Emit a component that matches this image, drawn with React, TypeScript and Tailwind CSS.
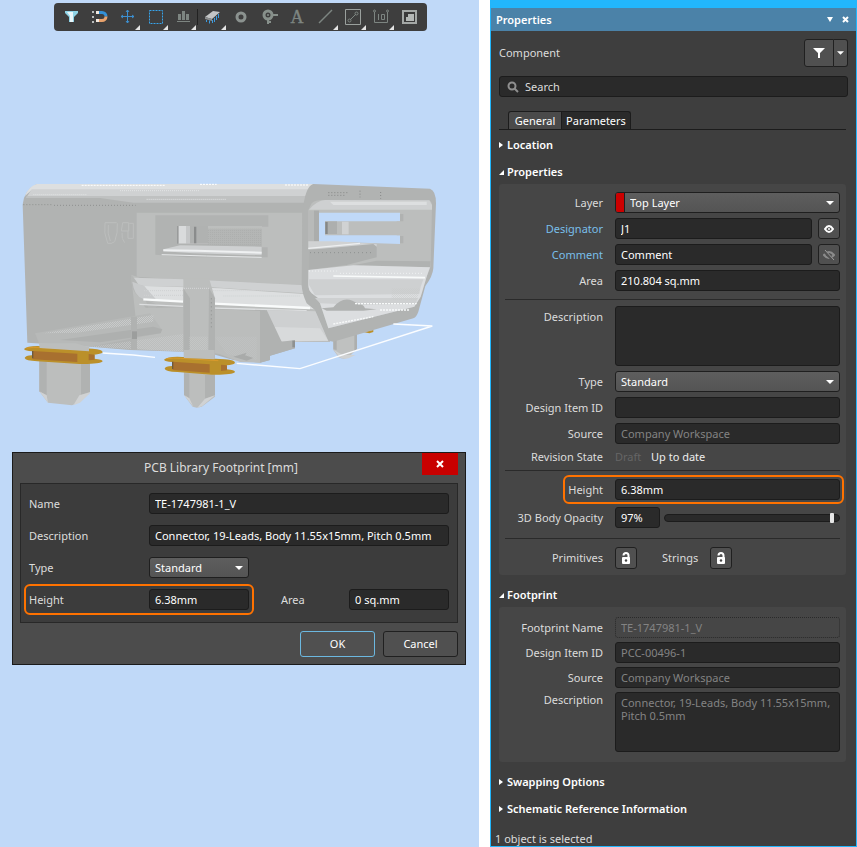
import { useState } from 'react';
import type { ReactNode } from 'react';
import clsx from 'clsx';

const FIELD =
  'h-[21px] min-w-0 rounded-[3px] border border-[#1c1c1c] bg-[#2a2a2a] px-[5px] text-[11px] leading-[19px] outline-none';
const BUTTON =
  'flex items-center justify-center rounded-[3px] border border-[#202020] bg-[#505050]';

interface SelectBoxProps {
  id: string;
  value: string;
  className?: string;
  swatch?: boolean;
}

function SelectBox({ id, value, className, swatch }: SelectBoxProps) {
  return (
    <div
      className={clsx(
        'relative flex h-[21px] items-center overflow-hidden rounded-[3px] border border-[#1f1f1f] bg-linear-to-b from-[#5e5e5e] to-[#545454]',
        className,
      )}
    >
      {swatch && <span className="h-full w-[9px] shrink-0 border-r border-[#1f1f1f] bg-[#cc0000]" />}
      <select
        id={id}
        defaultValue={value}
        className="h-full w-full appearance-none bg-transparent px-[5px] text-[11px] leading-[19px] text-white outline-none"
      >
        <option>{value}</option>
      </select>
      <svg className="pointer-events-none absolute right-[5px] h-[4px] w-[8px]" viewBox="0 0 8 4">
        <path d="M0 0h8L4 4z" fill="#fff" />
      </svg>
    </div>
  );
}

interface RowProps {
  label: string;
  htmlFor?: string;
  top?: boolean;
  link?: boolean;
  labelClassName?: string;
  children: ReactNode;
}

function Row({ label, htmlFor, top, link, labelClassName, children }: RowProps) {
  return (
    <div className={clsx('flex', top ? 'items-start' : 'items-center')}>
      <label
        htmlFor={htmlFor}
        className={clsx(
          'mr-3 w-[98px] shrink-0 text-right leading-4',
          link ? 'text-[#79bfea]' : 'text-[#dcdcdc]',
          labelClassName,
        )}
      >
        {label}
      </label>
      {children}
    </div>
  );
}

function SectionTitle({ title, open }: { title: string; open?: boolean }) {
  return (
    <button className="flex h-4 items-center gap-[3px] text-left font-semibold text-white" aria-expanded={!!open}>
      <svg className="h-[6px] w-[5px]" viewBox="0 0 5 6">
        {open ? <path d="M5 1v5H0z" fill="#fff" /> : <path d="M0 0l4 3-4 3z" fill="#fff" />}
      </svg>
      {title}
    </button>
  );
}

function Corner() {
  return <path d="M27 22v5h-5z" fill="#e4e4e4" />;
}

const TOOLS: { name: string; icon: ReactNode; menu?: boolean; divider?: boolean }[] = [
  {
    name: 'Filter',
    icon: (
      <>
        <path d="M8 8h13v2l-4 4v5h-5v-5l-4-4z" fill="#8fd3e6" />
        <path d="M10 9h6v10h-3v-6z" fill="#e9f6fa" />
      </>
    ),
  },
  {
    name: 'Snap',
    icon: (
      <>
        <path d="M7 8h2v2H7zM7 13h2v2H7zM7 18h2v2H7z" fill="#b9bdbd" />
        <path d="M12 9.500h5a4 4 0 0 1 4 4" fill="none" stroke="#3390d6" strokeWidth="3" />
        <path d="M12 17.500h5a4 4 0 0 0 4-4" fill="none" stroke="#e8a26c" strokeWidth="3" />
        <path d="M11 8h3v3h-3zM11 16h3v3h-3z" fill="#f2e8df" />
      </>
    ),
  },
  {
    name: 'Move',
    menu: true,
    icon: (
      <path
        d="M14.500 7v13M8 13.500h13M13 9l1.500-2L16 9M13 18l1.500 2 1.500-2M10 12l-2 1.500 2 1.500M19 12l2 1.500-2 1.500"
        fill="none"
        stroke="#3c8fd0"
      />
    ),
  },
  {
    name: 'Select area',
    menu: true,
    icon: <path d="M8.500 7.500h13v13h-13z" fill="none" stroke="#37a4ec" strokeDasharray="2 1" />,
  },
  {
    name: 'Align',
    menu: true,
    divider: true,
    icon: <path d="M9 11h3v6H9zM13 8h3v9h-3zM17 11h3v6h-3zM8 18h13v1H8z" fill="#7d8581" />,
  },
  {
    name: 'Place component',
    menu: true,
    icon: (
      <>
        <path d="M6 14l8-6 7 1-8 7z" fill="#c3c5c6" />
        <path d="M6 14l7 2v2l-7-2z" fill="#8d9091" />
        <path d="M7.500 17v2M10.500 17.500v3M13.500 17v3M15.500 15v4M17.500 13v4M19.500 11v4" stroke="#3c9be0" />
      </>
    ),
  },
  {
    name: 'Place pad',
    icon: <circle cx="14" cy="14" r="4" fill="none" stroke="#8b928f" strokeWidth="3" />,
  },
  {
    name: 'Place via',
    icon: (
      <>
        <circle cx="13" cy="12" r="4" fill="none" stroke="#87908b" strokeWidth="3" />
        <circle cx="13" cy="12" r="1" fill="#87908b" />
        <path d="M17 12h6M13 16v5M13 19h3" stroke="#87908b" strokeWidth="2" />
      </>
    ),
  },
  {
    name: 'Place text',
    icon: (
      <text x="14" y="20" textAnchor="middle" fontSize="18" fontFamily="Liberation Serif, serif" fill="#7d8581" stroke="#7d8581" strokeWidth="0.400">
        A
      </text>
    ),
  },
  {
    name: 'Place line',
    menu: true,
    icon: <path d="M8 20L21 7" stroke="#7d8581" strokeWidth="1.500" />,
  },
  {
    name: 'Place dimension',
    menu: true,
    icon: (
      <g fill="none" stroke="#7d8581">
        <path d="M6.500 6.500h15v15h-15z" stroke="#9aa09d" />
        <path d="M11 17l6-6" />
        <circle cx="10.500" cy="17.500" r="1.500" />
        <circle cx="17.500" cy="10.500" r="1.500" />
      </g>
    ),
  },
  {
    name: 'Place measurement',
    menu: true,
    icon: (
      <g fill="none" stroke="#7d8581">
        <path d="M7.500 9v10.500h13V9M11.500 11v6" />
        <circle cx="7.500" cy="8" r="1" />
        <circle cx="20.500" cy="8" r="1" />
        <path d="M14.500 11.500h3v5h-3z" />
      </g>
    ),
  },
  {
    name: 'Place region',
    icon: (
      <>
        <path d="M7 7h15v14H7z" fill="#a4a8a6" />
        <path d="M9 9h11v10H9z" fill="#3a3a3a" />
        <path d="M13 11h6v7h-8v-4h2z" fill="#b4b8b6" />
      </>
    ),
  },
];

function Toolbar() {
  return (
    <div className="mt-[3px] ml-[54px] flex h-7 w-[373px] items-center rounded bg-[#3e3e3e] pl-[3px]">
      {TOOLS.map((tool) => (
        <button
          key={tool.name}
          aria-label={tool.name}
          className={clsx('flex h-7 shrink-0 items-center', tool.divider ? 'w-[30px]' : 'w-7')}
        >
          <svg className="size-7 shrink-0" viewBox="0 0 28 28">
            {tool.icon}
            {tool.menu && <Corner />}
          </svg>
          {tool.divider && <span className="h-4 w-px bg-[#222]" />}
        </button>
      ))}
    </div>
  );
}

// One plated slot: two flanges with the barrel between them
function Pad({ x, y, width }: { x: number; y: number; width: number }) {
  return (
    <g transform={`translate(${x} ${y})`}>
      <path
        d={`M0 9Q8 0 40 0L${width - 30} 8Q${width} 10 ${width} 19Q${width - 6} 25 ${width - 25} 26V38Q${width} 40 ${width} 46Q${width - 8} 55 ${width - 70} 54L40 46Q4 44 2 36Q4 29 24 28V16Q4 15 0 9z`}
        fill="#bb902a"
      />
      <path d={`M26 15L${width - 76} 23V48L26 40z`} fill="#a8702f" />
      <path d={`M${width - 42} 24l18 2v15l-18 2z`} fill="#a8702f" />
      <path d="M24 15h4v22h-4z" fill="#6d5a3c" />
      <path d={`M8 6Q30 3 50 5L${width - 50} 12`} fill="none" stroke="#d99a2c" strokeWidth="3" />
    </g>
  );
}

function Connector() {
  return (
    <svg className="mt-[139px] h-[250px] w-full" viewBox="0 0 1437 750" role="img" aria-label="3D body of the connector">
      <defs>
        <pattern id="dots" width="6" height="6" patternUnits="userSpaceOnUse">
          <path d="M0 0h3v3H0zM3 3h3v3H3z" fill="#c9cbcb" />
        </pattern>
        <pattern id="darkDots" width="6" height="6" patternUnits="userSpaceOnUse">
          <path d="M0 0h3v3H0z" fill="#a2a4a4" />
        </pattern>
      </defs>

      {/* rear leg */}
      <path d="M1000 485h71v52l-25 25q-15 8-30 0l-16-22z" fill="#bfc1c0" />
      <path d="M1000 485h10v55l-10-2zM1063 485h8v52l-8 7z" fill="#adafae" />
      <path d="M1002 540l26 15h38l-20 10q-18 3-28-4z" fill="#d0d2d3" />
      <path d="M1090 486l30-6v6l-12 4z" fill="#bb902a" />

      {/* left leg */}
      <path d="M118 565h152v102l-32 30-22 9-72-8-26-34z" fill="#bcbebd" />
      <path d="M118 570h22v105l-22-10zM243 575h27v90l-27 10z" fill="#b0b2b1" />
      <path d="M118 664l22 12 4 22zM270 667l-32 9-18 30 20-8 30-28z" fill="#d0d2d3" />

      {/* shell side */}
      <path
        d="M68 104Q72 60 110 42H940L1000 300L990 515L845 515L885 510V535L810 557V570L780 578L700 570L640 553L550 545L390 540L270 530L82 518z"
        fill="#b1b3b2"
      />
      <path d="M75 78Q85 50 110 42H940L925 60H95z" fill="#dddfe0" />
      <path d="M95 58H925L917 78H82z" fill="#cfd1d2" />
      <path d="M80 78H917L914 98H400L300 84H78z" fill="#bfc1c1" />
      <path d="M245 46h250M600 43h50M855 45h70" stroke="#fff" strokeWidth="3" strokeDasharray="6 3" />
      <path d="M100 74h160M360 62h240M440 88h240" stroke="#e2e4e5" strokeWidth="3" strokeDasharray="3 3" />
      <path d="M70 104h85M162 106h245" stroke="#8f9190" strokeWidth="3" strokeDasharray="3 6" />
      <path d="M410 128H907V345L550 330L410 320z" fill="#bcbebd" />
      <path
        d="M350 158h-35q-5 30 8 62h10M325 165q-4 25 6 48M352 160q2 30-8 55l-12 6M368 158h18v25h-22zM366 188q-2 20 8 30M388 160h12v45h-16v-22"
        fill="none"
        stroke="#bcbebd"
        strokeWidth="3"
      />

      {/* side window */}
      <path d="M466 136H805V170H785V232H803V262H560L466 254z" fill="#b1b3b2" />
      <path d="M532 168H786V222H532z" fill="#bcbebd" />
      <path d="M624 176H786V224H624z" fill="#b4b6b5" />
      <path d="M624 176H786V224H624z" fill="url(#darkDots)" opacity="0.4" />
      <path d="M536 168h22v52h-22z" fill="#d9dbdc" />
      <path d="M558 168h12v52h-12z" fill="#c5c7c8" />
      <path d="M570 168h54v52h-54z" fill="#b0b2b1" />
      <path d="M532 168h3v53h-3zM582 170h7v50h-7z" fill="#8a8c8c" />
      <path d="M490 238L540 226L785 230V256L580 250L490 244z" fill="#ced0d1" />
      <path d="M490 241L590 242L785 248" fill="none" stroke="#eff1f2" strokeWidth="6" />
      <path d="M485 254L620 258L785 262" fill="none" stroke="#e6e8e9" strokeWidth="3" />

      {/* lower flange */}
      <path d="M393 314L420 323L550 328L905 345L950 420L990 515L845 516L800 420L645 410L430 405L450 430L385 445L270 462L410 470z" fill="#bcbebd" />
      <path d="M400 323L550 328L905 345L912 370L640 352L432 348L395 340z" fill="#cfd1d2" />
      <path d="M432 348L660 355L912 372Q920 400 945 418L640 400L550 393L465 390z" fill="#dddfe0" />
      <path d="M393 314Q425 345 450 430L475 405L430 388Q390 370 393 314z" fill="#b5b7b6" />
      <path d="M397 335Q402 378 430 388L470 390L432 348z" fill="#c8cacb" />
      <path d="M430 388L550 395M640 401L930 414" fill="none" stroke="#f9fbfb" strokeWidth="7" />
      <path d="M418 403L550 409M640 414L920 422" fill="none" stroke="#dddfe0" strokeWidth="4" />
      <path d="M795 420L948 424L985 512L845 515z" fill="#ced0d1" />
      <path d="M800 470L960 475L985 512L845 514z" fill="#d8dadb" />
      <path d="M640 362H905M670 378H900M432 362H550M432 376H550" stroke="#cfd1d2" strokeWidth="3" strokeDasharray="3 3" />

      {/* floor seen from below */}
      <path d="M410 412L450 414L550 412V545L410 538z" fill="#bcbebd" />
      <path d="M105 490L450 430L485 478L480 490L270 530L118 522z" fill="#b7b9b8" />
      <path d="M130 490L460 435V455L230 488z" fill="url(#dots)" />
      <path d="M270 530L550 492V545L410 538z" fill="url(#dots)" opacity="0.7" />
      <path d="M180 510L460 470L487 478L482 490L300 517z" fill="#aeb0af" />
      <path d="M393 440h18v98h-18z" fill="#b0b2b1" />
      <path d="M396 484h15v23h-15z" fill="#8f9190" opacity="0.6" />
      <path d="M115 520L268 530V544L130 534z" fill="#c5c7c8" />

      {/* right block */}
      <path d="M645 418L780 423V578L720 576L660 553L645 550z" fill="#bbbdbc" />
      <path d="M645 500h125v70l-90-18z" fill="url(#dots)" opacity="0.3" />
      <path d="M780 423L800 420L845 515L885 510V535L810 557V570L780 578z" fill="#b0b2b1" />
      <path d="M700 560l40-12-5 8 25 8-20 8z" fill="#a9abaa" />
      <path d="M877 512h8v20h-8z" fill="#8f9190" />

      {/* middle leg */}
      <path d="M550 325H627L645 385V680L605 710L590 713L578 710L552 675z" fill="#bcbebd" />
      <path d="M550 355L570 385V565H552zM627 355L645 385V565H625z" fill="#b0b2b1" />
      <path d="M552 610H568V685L552 675zM615 615H645V676L615 686z" fill="#b0b2b1" />
      <path d="M568 500h55v62h-55z" fill="url(#dots)" opacity="0.6" />
      <path d="M552 355h75" stroke="#d5d7d8" strokeWidth="3" strokeDasharray="3 3" />
      <path d="M634 385v90" stroke="#8f9190" strokeWidth="3" strokeDasharray="3 9" />
      <path d="M552 675L568 685L580 710zM645 676L615 686L592 713L606 709z" fill="#d0d2d3" />

      {/* mating face */}
      <path
        d="M940 42L1290 56Q1308 62 1308 100L1300 295Q1298 320 1276 348L1255 425Q1250 440 1240 445L1000 515L985 512L945 420L920 400Q906 370 905 345L907 130Q915 48 940 42z"
        fill="#b1b3b2"
      />
      <path
        d="M925 120L935 100Q945 90 970 90L1288 91Q1297 95 1296 110L1292 290L1280 320L1262 380L1243 410L985 475L955 385L935 370Q925 360 925 345z"
        fill="#bcbebd"
      />
      <path d="M927 119Q950 92 975 90L1288 91L1296 105V119z" fill="#ced0d1" />
      <path d="M990 95h290v10H1000z" fill="#dddfe0" />
      <path d="M925 122h32v92h-32zM942 122h15v92h-15z" fill="#b8bab9" />
      <path d="M942 122h15v92h-15z" fill="#abadac" />
      <path d="M957 128h243v26h-10v42h10v26l-180-6h-63z" fill="#c0d9f8" />
      <path d="M975 154h225v42H975z" fill="#bcbebd" />
      <path d="M975 154h36v38h-36z" fill="#adafae" />
      <path d="M976 156h7v36h-7z" fill="#858786" />
      <path d="M1026 155h20v38h-20z" fill="#d0d2d3" />
      <path d="M1200 132h10v22h-10zM1200 198h10v22h-10z" fill="#b0b2b1" />
      <path d="M925 214H1010L1130 222V230L925 238z" fill="#d0d2d3" />
      <path d="M925 235L1080 220" stroke="#edeff0" strokeWidth="4" />
      <path d="M925 240L1120 222L1130 230V262L1040 285L925 300z" fill="#aeb0af" />
      <path d="M930 248H1120" stroke="#8f9190" strokeWidth="3" strokeDasharray="3 9" />
      <path d="M1130 272L1292 274L1290 292L1060 286z" fill="#b0b2b1" />
      <path d="M925 300L1060 286L1290 292L1280 320L1262 380L1243 410L985 475L955 385L935 370Q925 360 925 345z" fill="#dcdee0" />
      <path d="M1000 318L1275 323" fill="none" stroke="#f8fafa" strokeWidth="5" />
      <path d="M927 303H1010M1020 310H1270" stroke="#eff1f2" strokeWidth="3" strokeDasharray="3 6" />
      <path d="M927 328H1270L1262 350L1258 372L945 376L927 345z" fill="#ced0d1" />
      <path d="M945 384L1255 384L1245 402L1090 405L960 400z" fill="#ced0d1" />
      <path d="M1175 355h85l-10 35h-75z" fill="url(#dots)" opacity="0.6" />
      <path d="M965 415L1000 412Q1035 370 1075 404Q1090 400 1095 415L1130 418L1090 422H980z" fill="#b0b2b1" />
      <path d="M1065 401H1250M1000 462L1120 440M1140 420H1230" stroke="#f8fafa" strokeWidth="4" strokeDasharray="6 3" />
      <path d="M985 68h60M985 76h50M1080 62v20M1142 66v20" stroke="#858786" strokeWidth="3" strokeDasharray="3 6" />

      {/* board outline and pads */}
      <path d="M308 549L400 555L465 562M710 580L900 596L1297 468L1180 462" fill="none" stroke="#fbfdff" strokeWidth="4" />
      <Pad x={72} y={528} width={236} />
      <Pad x={492} y={560} width={213} />
      <path d="M117 520h110l40 12v12l-148-10zM552 540h92v28l-92-4z" fill="#bcbebd" />
    </svg>
  );
}

function FootprintDialog() {
  return (
    <section className="mt-8 mr-[13px] ml-3 border border-[#1b1b1b] bg-[#4c4c4c] px-[7px] pb-[7px] text-[#dcdcdc]">
      <header className="flex h-[30px] items-start">
        <h2 className="flex-1 pt-[7px] text-center text-[12px] leading-4">PCB Library Footprint [mm]</h2>
        <button aria-label="Close" className="flex h-[22px] w-9 items-center justify-center bg-[#c80000]">
          <svg className="size-2" viewBox="0 0 8 8">
            <path d="M1 1l6 6M7 1L1 7" stroke="#fff" strokeWidth="2" />
          </svg>
        </button>
      </header>
      <form className="flex flex-col gap-[11px] border border-[#282828] bg-[#3c3c3c] px-2 pt-[9px] pb-3">
        <div className="flex items-center">
          <label htmlFor="fp-name" className="w-[120px]">Name</label>
          <input id="fp-name" defaultValue="TE-1747981-1_V" className={clsx(FIELD, 'flex-1 text-white')} />
        </div>
        <div className="flex items-center">
          <label htmlFor="fp-desc" className="w-[120px]">Description</label>
          <input
            id="fp-desc"
            defaultValue="Connector, 19-Leads, Body 11.55x15mm, Pitch 0.5mm"
            className={clsx(FIELD, 'flex-1 text-white')}
          />
        </div>
        <div className="flex items-center">
          <label htmlFor="fp-type" className="w-[120px]">Type</label>
          <SelectBox id="fp-type" value="Standard" className="w-[100px]" />
        </div>
        <div className="relative flex items-center">
          <label htmlFor="fp-height" className="w-[120px]">Height</label>
          <input id="fp-height" defaultValue="6.38mm" className={clsx(FIELD, 'w-[100px] text-white')} />
          <label htmlFor="fp-area" className="ml-8 flex-1">Area</label>
          <input id="fp-area" defaultValue="0 sq.mm" className={clsx(FIELD, 'w-[100px] text-white')} />
          <span className="pointer-events-none absolute -inset-y-[5px] -left-[5px] w-[230px] rounded-md border-2 border-[#ff7200]" />
        </div>
      </form>
      <div className="mt-2 flex justify-end gap-2">
        <button className="h-[26px] w-[75px] rounded-[3px] border border-[#6cb8e0] bg-[#505050] text-white">OK</button>
        <button className="h-[26px] w-[75px] rounded-[3px] border border-[#202020] bg-[#505050] text-white">Cancel</button>
      </div>
    </section>
  );
}

function LockButton({ label }: { label: string }) {
  return (
    <button aria-label={label} className={clsx(BUTTON, 'size-[22px]')}>
      <svg className="size-3" viewBox="0 0 12 12">
        <path d="M3.500 3.500q0-2.500 2.500-2.500t2.500 2.500V6" fill="none" stroke="#fff" strokeWidth="2" />
        <rect x="2" y="5" width="8" height="7" rx="1" fill="#fff" />
        <circle cx="6" cy="8.500" r="1.200" fill="#444" />
      </svg>
    </button>
  );
}

function PropertiesGroup() {
  const [opacity, setOpacity] = useState(97);

  return (
    <div className="mt-1 mr-0.5 rounded-[3px] bg-[#464646] px-1.5 pt-2 pb-1.5">
      <div className="flex flex-col gap-[5px]">
        <Row label="Layer" htmlFor="layer">
          <SelectBox id="layer" value="Top Layer" className="flex-1" swatch />
        </Row>
        <Row label="Designator" htmlFor="designator" link>
          <input id="designator" defaultValue="J1" className={clsx(FIELD, 'mr-1.5 flex-1 text-white')} />
          <button aria-label="Show designator" className={clsx(BUTTON, 'h-[21px] w-[22px]')}>
            <svg className="h-2 w-2.5" viewBox="0 0 10 8">
              <path d="M1 4q4-6 8 0q-4 6-8 0z" fill="none" stroke="#fff" strokeWidth="2" />
              <circle cx="5" cy="4" r="1" fill="#fff" />
            </svg>
          </button>
        </Row>
        <Row label="Comment" htmlFor="comment" link>
          <input id="comment" defaultValue="Comment" className={clsx(FIELD, 'mr-1.5 flex-1 text-white')} />
          <button aria-label="Show comment" className={clsx(BUTTON, 'h-[21px] w-[22px]')}>
            <svg className="size-3" viewBox="0 0 12 12">
              <path d="M1 6q5-6 10 0q-5 6-10 0z" fill="none" stroke="#8c8c8c" strokeWidth="2" />
              <path d="M1 2l9 9" stroke="#505050" strokeWidth="3" />
              <path d="M2 1l9 10" stroke="#9c9c9c" />
            </svg>
          </button>
        </Row>
        <Row label="Area" htmlFor="area">
          <input id="area" defaultValue="210.804 sq.mm" className={clsx(FIELD, 'flex-1 text-white')} />
        </Row>
      </div>
      <hr className="mt-2 mb-1.5 border-[#2a2a2a]" />
      <div className="flex flex-col gap-[5px]">
        <Row label="Description" htmlFor="description" labelClassName="pt-[3px]" top>
          <textarea
            id="description"
            className="h-[60px] min-w-0 flex-1 resize-none rounded-[3px] border border-[#1c1c1c] bg-[#2a2a2a] outline-none"
          />
        </Row>
        <Row label="Type" htmlFor="type">
          <SelectBox id="type" value="Standard" className="flex-1" />
        </Row>
        <Row label="Design Item ID" htmlFor="item-id">
          <input id="item-id" className={clsx(FIELD, 'flex-1 text-white')} />
        </Row>
        <Row label="Source" htmlFor="source">
          <input id="source" readOnly value="Company Workspace" className={clsx(FIELD, 'flex-1 text-[#838383]')} />
        </Row>
        <Row label="Revision State">
          <span className="w-9 leading-4 text-[#656565]">Draft</span>
          <span className="leading-4 text-[#ececec]">Up to date</span>
        </Row>
      </div>
      <hr className="mt-[5px] mb-2 border-[#2a2a2a]" />
      <div className="relative">
        <Row label="Height" htmlFor="height">
          <input id="height" defaultValue="6.38mm" className={clsx(FIELD, 'flex-1 text-white')} />
        </Row>
        <span className="pointer-events-none absolute -inset-y-1 -right-1 left-[58px] rounded-md border-2 border-[#ff7200]" />
      </div>
      <div className="mt-[7px]">
        <Row label="3D Body Opacity" htmlFor="opacity">
          <input
            id="opacity"
            value={`${opacity}%`}
            onChange={(e) => setOpacity(Number.parseInt(e.target.value, 10) || 0)}
            className={clsx(FIELD, 'w-[45px] text-white')}
          />
          <input
            type="range"
            aria-label="3D body opacity"
            min={0}
            max={100}
            value={opacity}
            onChange={(e) => setOpacity(Number(e.target.value))}
            className="ml-1 h-2 min-w-0 flex-1 appearance-none rounded-full border border-[#1c1c1c] bg-[#2a2a2a] [&::-webkit-slider-thumb]:h-2.5 [&::-webkit-slider-thumb]:w-1 [&::-webkit-slider-thumb]:appearance-none [&::-webkit-slider-thumb]:rounded-[1px] [&::-webkit-slider-thumb]:bg-[#e6e6e6]"
          />
        </Row>
      </div>
      <hr className="mt-2.5 mb-2 border-[#2a2a2a]" />
      <Row label="Primitives">
        <LockButton label="Lock primitives" />
        <span className="mr-3 ml-[25px] text-[#dcdcdc]">Strings</span>
        <LockButton label="Lock strings" />
      </Row>
    </div>
  );
}

function FootprintGroup() {
  return (
    <div className="mt-1 mr-0.5 flex flex-col gap-1 rounded-[3px] bg-[#464646] px-1.5 py-2.5">
      <Row label="Footprint Name" htmlFor="footprint-name">
        <input
          id="footprint-name"
          readOnly
          value="TE-1747981-1_V"
          className="h-[21px] min-w-0 flex-1 rounded-[3px] border border-dotted border-[#2a2a2a] bg-[#464646] px-[5px] text-[11px] leading-[19px] text-[#838383] outline-none"
        />
      </Row>
      <Row label="Design Item ID" htmlFor="footprint-id">
        <input id="footprint-id" readOnly value="PCC-00496-1" className={clsx(FIELD, 'flex-1 text-[#838383]')} />
      </Row>
      <Row label="Source" htmlFor="footprint-source">
        <input id="footprint-source" readOnly value="Company Workspace" className={clsx(FIELD, 'flex-1 text-[#838383]')} />
      </Row>
      <Row label="Description" htmlFor="footprint-desc" top>
        <textarea
          id="footprint-desc"
          readOnly
          value="Connector, 19-Leads, Body 11.55x15mm, Pitch 0.5mm"
          className="h-[60px] min-w-0 flex-1 resize-none rounded-[3px] border border-[#1c1c1c] bg-[#2a2a2a] px-[5px] py-[3px] text-[11px] leading-[13px] text-[#838383] outline-none"
        />
      </Row>
    </div>
  );
}

function PropertiesPanel() {
  return (
    <aside className="flex w-[367px] shrink-0 flex-col border border-t-8 border-[#22b6fc] bg-[#3e3e3e]">
      <header className="flex h-[23px] items-center bg-[#4b82a8] pr-[7px] pl-[5px]">
        <h1 className="flex-1 font-semibold text-white">Properties</h1>
        <button aria-label="Panel menu" className="mr-[9px]">
          <svg className="h-[5px] w-[6px]" viewBox="0 0 6 5">
            <path d="M0 0h6L3 5z" fill="#fff" />
          </svg>
        </button>
        <button aria-label="Close panel">
          <svg className="size-[7px]" viewBox="0 0 7 7">
            <path d="M1 1l5 5M6 1L1 6" stroke="#fff" strokeWidth="2" />
          </svg>
        </button>
      </header>
      <div className="flex flex-col px-2 pt-2">
        <div className="flex items-center">
          <span className="flex-1 text-[#dcdcdc]">Component</span>
          <button aria-label="Filter objects" className="flex h-7 w-[30px] items-center justify-center rounded-l-[3px] border border-[#202020] bg-[#505050]">
            <svg className="size-3" viewBox="0 0 12 12">
              <path d="M0 1h12L7 6v5H5V6z" fill="#fff" />
            </svg>
          </button>
          <button aria-label="Filter options" className="flex h-7 w-3.5 items-center justify-center rounded-r-[3px] border border-l-0 border-[#202020] bg-[#505050]">
            <svg className="h-[4px] w-[7px]" viewBox="0 0 8 4">
              <path d="M0 0h8L4 4z" fill="#fff" />
            </svg>
          </button>
        </div>
        <div className="mt-[9px] flex h-[21px] items-center rounded-[3px] border border-[#1c1c1c] bg-[#2a2a2a] pl-[7px]">
          <svg className="size-3" viewBox="0 0 12 12">
            <circle cx="5" cy="5" r="3.500" fill="none" stroke="#8f8f8f" strokeWidth="2" />
            <path d="M7.500 7.500L11 11" stroke="#8f8f8f" strokeWidth="2" />
          </svg>
          <input
            aria-label="Search"
            placeholder="Search"
            className="ml-1.5 min-w-0 flex-1 bg-transparent text-[11px] outline-none placeholder:text-[#dcdcdc]"
          />
        </div>
        <div role="tablist" className="mt-3.5 mr-0.5 flex border-b border-[#1c1c1c] pl-[9px] text-white">
          <button role="tab" aria-selected="true" className="h-[18px] w-[54px] rounded-tl-[3px] border border-b-0 border-[#1c1c1c] bg-[#4a4a4a]">
            General
          </button>
          <button role="tab" aria-selected="false" className="h-[18px] w-[69px] rounded-tr-[3px] border border-b-0 border-l-0 border-[#1c1c1c] bg-[#2a2a2a]">
            Parameters
          </button>
        </div>
        <div className="mt-[7px] flex flex-col gap-[11px]">
          <SectionTitle title="Location" />
          <SectionTitle title="Properties" open />
        </div>
        <PropertiesGroup />
        <div className="mt-3 flex flex-col">
          <SectionTitle title="Footprint" open />
        </div>
        <FootprintGroup />
        <div className="mt-3 flex flex-col gap-[11px]">
          <SectionTitle title="Swapping Options" />
          <SectionTitle title="Schematic Reference Information" />
        </div>
      </div>
      <footer className="mt-auto px-1 leading-[14px] text-[#dcdcdc]">1 object is selected</footer>
    </aside>
  );
}

export default function App() {
  return (
    <div className="flex min-h-screen gap-[11px] bg-white font-['Noto_Sans',sans-serif] text-[11px] leading-4">
      <main className="flex min-w-0 flex-1 flex-col bg-[#c0d9f8]">
        <Toolbar />
        <Connector />
        <FootprintDialog />
      </main>
      <PropertiesPanel />
    </div>
  );
}
